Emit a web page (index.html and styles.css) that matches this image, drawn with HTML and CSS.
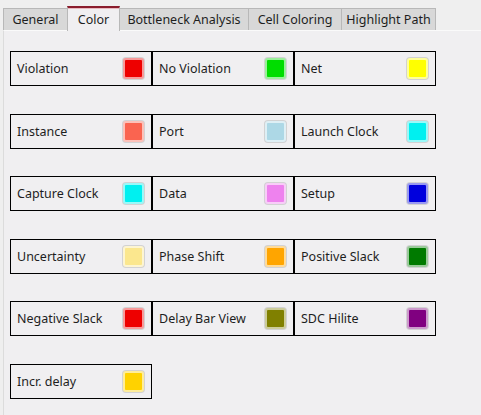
FILE: index.html
```html
<!DOCTYPE html>
<html lang="en">
<head>
    <meta charset="UTF-8">
    <title>Color</title>
    <link rel="stylesheet" href="styles.css">
</head>
<body>
    <div class="tabs">
        <div class="tab">General</div>
        <div class="tab active">Color</div>
        <div class="tab">Bottleneck Analysis</div>
        <div class="tab">Cell Coloring</div>
        <div class="tab">Highlight Path</div>
    </div>
    <div class="pane">
        <div class="grid">
            <div class="cell"><span>Violation</span><span class="swatch" style="background-color:#ee0000"></span></div>
            <div class="cell"><span>No Violation</span><span class="swatch" style="background-color:#00dd00"></span></div>
            <div class="cell"><span>Net</span><span class="swatch" style="background-color:#ffff00"></span></div>

            <div class="cell"><span>Instance</span><span class="swatch" style="background-color:#fa6450"></span></div>
            <div class="cell"><span>Port</span><span class="swatch" style="background-color:#add8e6"></span></div>
            <div class="cell"><span>Launch Clock</span><span class="swatch" style="background-color:#00f0f0"></span></div>

            <div class="cell"><span>Capture Clock</span><span class="swatch" style="background-color:#00f0f0"></span></div>
            <div class="cell"><span>Data</span><span class="swatch" style="background-color:#ee82ee"></span></div>
            <div class="cell"><span>Setup</span><span class="swatch" style="background-color:#0000dd"></span></div>

            <div class="cell"><span>Uncertainty</span><span class="swatch" style="background-color:#fbe78e"></span></div>
            <div class="cell"><span>Phase Shift</span><span class="swatch" style="background-color:#ffa500"></span></div>
            <div class="cell"><span>Positive Slack</span><span class="swatch" style="background-color:#007a00"></span></div>

            <div class="cell"><span>Negative Slack</span><span class="swatch" style="background-color:#ee0000"></span></div>
            <div class="cell"><span>Delay Bar View</span><span class="swatch" style="background-color:#808000"></span></div>
            <div class="cell"><span>SDC Hilite</span><span class="swatch" style="background-color:#800080"></span></div>

            <div class="cell"><span>Incr. delay</span><span class="swatch" style="background-color:#ffd200"></span></div>
        </div>
    </div>
</body>
</html>
```

FILE: styles.css
```css
body {
    margin: 0;
    background-color: #efefef;
    font-family: "Noto Sans", "Open Sans", sans-serif;
    font-size: 12.5px;
    color: #1e1e1e;
    height: 415px;
    display: flex;
    flex-direction: column;
}
.tabs {
    display: flex;
    padding: 0 0 0 3px;
    height: 30px;
    box-sizing: border-box;
    align-items: flex-end;
}
.tab {
    height: 22px;
    box-sizing: border-box;
    font-size: 12.5px;
    display: flex;
    align-items: center;
    justify-content: center;
    background: #d8d8d8;
    border: 1px solid #b8b8b8;
    border-bottom: none;
    margin-right: -1px;
    white-space: nowrap;
}
.tab:nth-child(1) { width: 65px; }
.tab:nth-child(2) { width: 53px; }
.tab:nth-child(3) { width: 130px; }
.tab:nth-child(4) { width: 94px; }
.tab:nth-child(5) { width: 95px; }
.tab.active {
    height: 25px;
    background: #f0eff1;
    border-top: 2px solid #8a1c2c;
    box-shadow: inset 0 1px 0 #e8b8be;
    position: relative;
    z-index: 1;
    margin-bottom: -1px;
}
.pane {
    flex: 1;
    background: #f0eff1;
    border-top: 1px solid #fafafa;
    border-left: 1px solid #dcdcdc;
    margin-left: 3px;
    padding: 20px 0 0 6px;
}
.grid {
    display: grid;
    grid-template-columns: repeat(3, 142px);
    grid-auto-rows: 35px;
    row-gap: 27.6px;
}
.cell {
    border: 1px solid #000;
    display: flex;
    align-items: center;
    justify-content: space-between;
    padding: 0 7px 0 6px;
}
.swatch {
    width: 21px;
    height: 21px;
    box-sizing: border-box;
    border: 2px solid rgba(255, 255, 255, 0.6);
    border-radius: 3px;
    box-shadow: 0 0 0 1px rgba(0, 0, 0, 0.12);
}
```
